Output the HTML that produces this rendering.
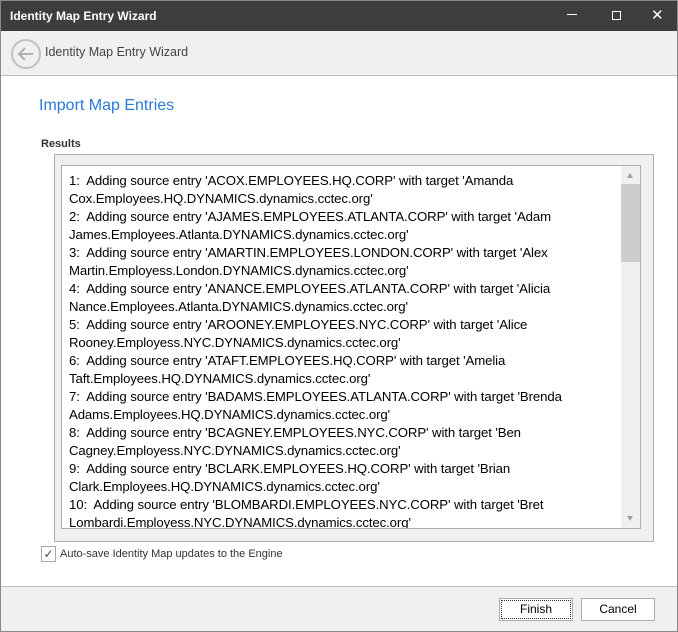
<!DOCTYPE html>
<html><head><style>
*{margin:0;padding:0;box-sizing:border-box}
body{width:678px;height:632px;position:relative;background:#fff;font-family:"Liberation Sans",sans-serif;overflow:hidden}
.a{position:absolute}
#title{left:0;top:0;width:678px;height:31px;background:#3d3d3d;color:#fff;font-weight:bold;font-size:12px;padding:9px 0 0 10px}
#hdr{left:0;top:31px;width:678px;height:45px;background:#f0f0f0;border-bottom:1px solid #bbb}
.box{left:54px;top:154px;width:600px;height:388px;background:#f0f0f0;border:1px solid #adadad}
.tb{left:61px;top:165px;width:580px;height:364px;background:#fff;border:1px solid #adadad;overflow:hidden}
.tx{position:absolute;left:7px;top:6px;font-size:13.2px;line-height:18px;color:#000;width:560px;letter-spacing:-0.1px}
.sb{position:absolute;right:0;top:0;width:19px;height:362px;background:#f0f0f0}
.btn{top:598px;height:23px;background:#fff;border:1px solid #adadad;font-size:12px;text-align:center;line-height:21px}
</style></head><body>
<div class="a" id="title">Identity Map Entry Wizard</div>
<div class="a" style="left:567px;top:14px;width:10px;height:1px;background:#fff"></div>
<div class="a" style="left:612px;top:11px;width:9px;height:9px;border:1px solid #fff"></div>
<div class="a" style="left:651px;top:6px;color:#fff;font-size:15px">✕</div>
<div class="a" id="hdr"></div>
<svg class="a" style="left:10px;top:38px" width="32" height="32"><circle cx="16" cy="16" r="14" fill="none" stroke="#c0c0c0" stroke-width="2"/><path d="M23 16H9M15 10l-6 6 6 6" fill="none" stroke="#b0b0b0" stroke-width="2"/></svg>
<div class="a" style="left:45px;top:45px;font-size:12.5px;color:#444">Identity Map Entry Wizard</div>
<div class="a" style="left:39px;top:97px;font-size:16px;color:#2a7ad6">Import Map Entries</div>
<div class="a" style="left:41px;top:138px;font-size:11px;font-weight:bold;color:#333">Results</div>
<div class="a box"></div>
<div class="a tb"><div class="tx">
1:&nbsp; Adding source entry 'ACOX.EMPLOYEES.HQ.CORP' with target 'Amanda Cox.Employees.HQ.DYNAMICS.dynamics.cctec.org'<br>
2:&nbsp; Adding source entry 'AJAMES.EMPLOYEES.ATLANTA.CORP' with target 'Adam James.Employees.Atlanta.DYNAMICS.dynamics.cctec.org'<br>
3:&nbsp; Adding source entry 'AMARTIN.EMPLOYEES.LONDON.CORP' with target 'Alex Martin.Employess.London.DYNAMICS.dynamics.cctec.org'<br>
4:&nbsp; Adding source entry 'ANANCE.EMPLOYEES.ATLANTA.CORP' with target 'Alicia Nance.Employees.Atlanta.DYNAMICS.dynamics.cctec.org'<br>
5:&nbsp; Adding source entry 'AROONEY.EMPLOYEES.NYC.CORP' with target 'Alice Rooney.Employess.NYC.DYNAMICS.dynamics.cctec.org'<br>
6:&nbsp; Adding source entry 'ATAFT.EMPLOYEES.HQ.CORP' with target 'Amelia Taft.Employees.HQ.DYNAMICS.dynamics.cctec.org'<br>
7:&nbsp; Adding source entry 'BADAMS.EMPLOYEES.ATLANTA.CORP' with target 'Brenda Adams.Employees.HQ.DYNAMICS.dynamics.cctec.org'<br>
8:&nbsp; Adding source entry 'BCAGNEY.EMPLOYEES.NYC.CORP' with target 'Ben Cagney.Employess.NYC.DYNAMICS.dynamics.cctec.org'<br>
9:&nbsp; Adding source entry 'BCLARK.EMPLOYEES.HQ.CORP' with target 'Brian Clark.Employees.HQ.DYNAMICS.dynamics.cctec.org'<br>
10:&nbsp; Adding source entry 'BLOMBARDI.EMPLOYEES.NYC.CORP' with target 'Bret Lombardi.Employess.NYC.DYNAMICS.dynamics.cctec.org'
</div>
<div class="sb"><div style="position:absolute;left:0;top:18px;width:19px;height:78px;background:#cdcdcd"></div>
<div style="position:absolute;left:6px;top:7px;border-left:3.5px solid transparent;border-right:3.5px solid transparent;border-bottom:5px solid #a0a0a0"></div>
<div style="position:absolute;left:6px;top:350px;border-left:3.5px solid transparent;border-right:3.5px solid transparent;border-top:5px solid #a0a0a0"></div></div>
</div>
<div class="a" style="left:41px;top:546px;width:15px;height:16px;border:1px solid #aaa;background:#fff;font-size:12px;line-height:14px;text-align:center;color:#444">✓</div>
<div class="a" style="left:60px;top:548px;font-size:11px;color:#333">Auto-save Identity Map updates to the Engine</div>
<div class="a" style="left:0;top:586px;width:678px;height:46px;background:#f0f0f0;border-top:1px solid #bbb"></div>
<div class="a btn" style="left:499px;width:74px;outline:1px dotted #333;outline-offset:-3px">Finish</div>
<div class="a btn" style="left:581px;width:74px">Cancel</div>
<div class="a" style="left:0;top:0;width:678px;height:632px;border:1px solid #888;pointer-events:none"></div>
</body></html>
